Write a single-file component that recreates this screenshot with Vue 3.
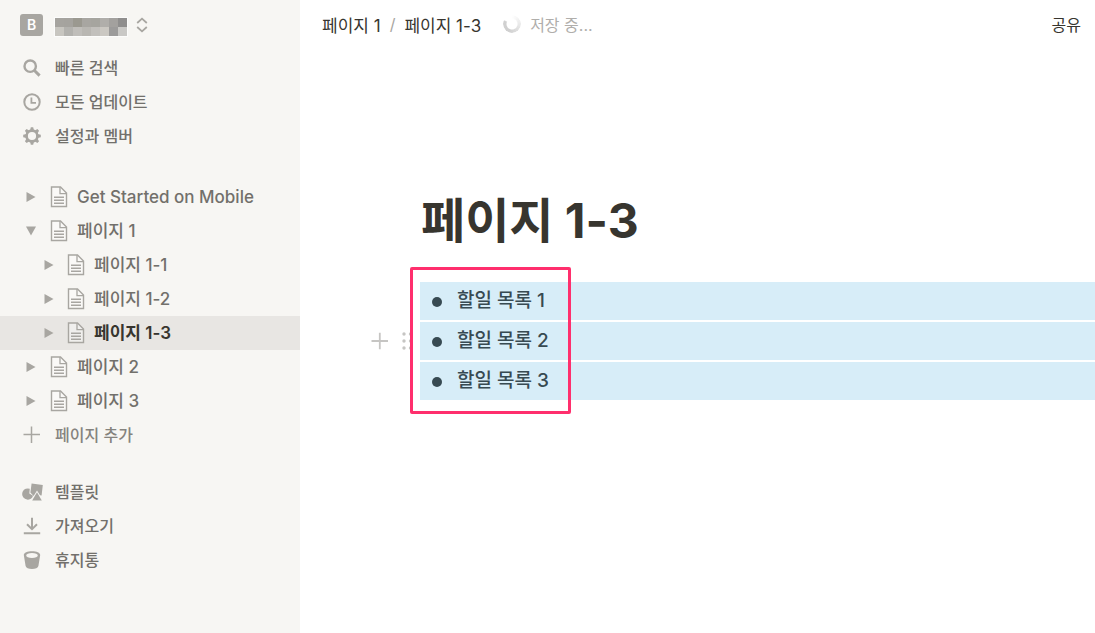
<script setup>
import { ref } from 'vue'

const mosaic = [
  '#a6a49f', '#a5a39e', '#9b9990', '#a8a6a1', '#a6a59f', '#b0aeaa', '#a3a19e', '#8f8e8d',
  '#c8c6c0', '#b3b2ae', '#c0beba', '#b9b7b2', '#c2c0bc', '#cbc8c2', '#9c9b9a', '#c9c8c5',
]

const pages = ref([
  { name: 'Get Started on Mobile', level: 0, open: false, current: false },
  { name: '페이지 1', level: 0, open: true, current: false },
  { name: '페이지 1-1', level: 1, open: false, current: false },
  { name: '페이지 1-2', level: 1, open: false, current: false },
  { name: '페이지 1-3', level: 1, open: false, current: true },
  { name: '페이지 2', level: 0, open: false, current: false },
  { name: '페이지 3', level: 0, open: false, current: false },
])

const todos = ['할일 목록 1', '할일 목록 2', '할일 목록 3']
</script>

<template>
  <div class="app">
    <aside class="sidebar">
      <button class="workspace" type="button" aria-label="B">
        <span class="badge">B</span>
        <span class="mosaic">
          <i v-for="(c, i) in mosaic" :key="i" :style="{ background: c }"></i>
        </span>
        <svg class="updown" width="12" height="16" viewBox="0 0 12 16">
          <path d="M1.2 6 6 1.6 10.8 6M1.2 10 6 14.4 10.8 10" fill="none" stroke="currentColor" stroke-width="1.8" />
        </svg>
      </button>

      <nav class="group">
        <a class="row" href="#search">
          <svg class="icon" viewBox="0 0 18 18">
            <circle cx="7.2" cy="7.2" r="5.7" fill="none" stroke="currentColor" stroke-width="2.4" />
            <path d="M11.2 11.2 16.6 16.6" fill="none" stroke="currentColor" stroke-width="3" />
          </svg>
          <span>빠른 검색</span>
        </a>
        <a class="row" href="#updates">
          <svg class="icon" viewBox="0 0 18 18">
            <circle cx="9" cy="9" r="7.7" fill="none" stroke="currentColor" stroke-width="2" />
            <path d="M8.4 4.6V9.9H13" fill="none" stroke="currentColor" stroke-width="1.8" />
          </svg>
          <span>모든 업데이트</span>
        </a>
        <a class="row" href="#settings">
          <svg class="icon" viewBox="0 0 18 18">
            <circle cx="9" cy="9" r="5.4" fill="none" stroke="currentColor" stroke-width="2.6" />
            <g fill="currentColor">
              <path
                v-for="n in 8"
                :key="n"
                d="M7 3.4 7.8.2H10.2L11 3.4Z"
                :transform="`rotate(${n * 45} 9 9)`"
              />
            </g>
          </svg>
          <span>설정과 멤버</span>
        </a>
      </nav>

      <nav class="group tree">
        <div
          v-for="page in pages"
          :key="page.name"
          class="row page"
          :class="{ nested: page.level === 1, current: page.current }"
        >
          <button
            class="toggle"
            type="button"
            :aria-label="page.name"
            :aria-expanded="page.open"
            @click="page.open = !page.open"
          >
            <svg width="10" height="10" viewBox="0 0 10 10">
              <path :d="page.open ? 'M0 .5H10L5 9.5Z' : 'M.5 0V10L9.5 5Z'" fill="currentColor" />
            </svg>
          </button>
          <a class="page-link" href="#page">
            <svg class="doc" width="18" height="22" viewBox="0 0 18 22">
              <path d="M1.5 1H10.5L16.5 7V20.5H1.5Z" fill="#fff" fill-opacity=".35" stroke="currentColor" stroke-width="1.4" />
              <path d="M10 1V7.6H16.5" fill="none" stroke="currentColor" stroke-width="1.3" />
              <path d="M4 11.3H14M4 14.3H14M4 17.3H14" fill="none" stroke="currentColor" stroke-width="1.4" />
            </svg>
            <span>{{ page.name }}</span>
          </a>
        </div>
        <button class="row add" type="button">
          <svg class="icon" viewBox="0 0 18 18">
            <path d="M.5 8.5H17M8.5.5V17" fill="none" stroke="currentColor" stroke-width="1.5" />
          </svg>
          <span>페이지 추가</span>
        </button>
      </nav>

      <nav class="group">
        <a class="row" href="#templates">
          <svg class="icon wide" viewBox="0 0 22 18">
            <path d="M10.6 0.6 21.8 2 20.6 12.4 19 12.2 16 7.600 12.600 13 9.400 9.600Z" fill="currentColor" />
            <path d="M8.800 5.800A5.600 5.600 0 1 0 11.400 14.200L12 12.800 8.300 10.600Z" fill="currentColor" />
            <path d="M16 9.200 20.800 17.400H11.200Z" fill="currentColor" />
          </svg>
          <span>템플릿</span>
        </a>
        <a class="row" href="#import">
          <svg class="icon" viewBox="0 0 18 18">
            <path d="M9 .8V12M4 7.3 9 12.2 14 7.3M.8 16.3H17.2" fill="none" stroke="currentColor" stroke-width="2" />
          </svg>
          <span>가져오기</span>
        </a>
        <a class="row" href="#trash">
          <svg class="icon" viewBox="0 0 18 18">
            <path
              fill="currentColor"
              fill-rule="evenodd"
              d="M.8 4C.8 1.6 4.5.2 9 .2S17.2 1.6 17.2 4L15.4 15C15 17 12.5 17.9 9 17.9S3 17 2.6 15ZM9 2C5.5 2 3.2 3 3.2 4.4S5.5 6.9 9 6.9 14.8 5.8 14.8 4.4 12.5 2 9 2Z"
            />
          </svg>
          <span>휴지통</span>
        </a>
      </nav>
    </aside>

    <main class="main">
      <header class="topbar">
        <a class="crumb" href="#page-1">페이지 1</a>
        <span class="slash">/</span>
        <a class="crumb" href="#page-1-3">페이지 1-3</a>
        <span class="saving">
          <span class="spinner"></span>
          <span>저장 중...</span>
        </span>
        <button class="share" type="button">공유</button>
      </header>

      <article class="content">
        <h1>페이지 1-3</h1>
        <div class="selection">
          <ul class="todos">
            <li v-for="todo in todos" :key="todo">{{ todo }}</li>
          </ul>
          <div class="handles">
            <button type="button" aria-label="+">
              <svg width="18" height="18" viewBox="0 0 18 18">
                <path d="M.5 9H17M8.8.8V17.2" fill="none" stroke="currentColor" stroke-width="1.8" />
              </svg>
            </button>
            <button type="button" aria-label="⋮⋮">
              <svg width="12" height="18" viewBox="0 0 12 18">
                <g fill="currentColor">
                  <circle cx="3" cy="2" r="1.7" /><circle cx="9.5" cy="2" r="1.7" />
                  <circle cx="3" cy="9" r="1.7" /><circle cx="9.5" cy="9" r="1.7" />
                  <circle cx="3" cy="16" r="1.7" /><circle cx="9.5" cy="16" r="1.7" />
                </g>
              </svg>
            </button>
          </div>
          <div class="highlight"></div>
        </div>
      </article>
    </main>
  </div>
</template>

<style>
body {
  margin: 0;
}
</style>

<style scoped>
.app {
  display: flex;
  min-height: 100vh;
  background: #fff;
  color: #37352f;
  font-family: Inter, 'Noto Sans CJK KR', sans-serif;
  font-size: 16px;
}
a {
  color: inherit;
  text-decoration: none;
}
button {
  margin: 0;
  padding: 0;
  border: 0;
  background: none;
  color: inherit;
  font: inherit;
  text-align: left;
  cursor: pointer;
}
svg {
  display: block;
  flex: none;
}
.sidebar {
  flex: 0 0 300px;
  display: flex;
  flex-direction: column;
  gap: 23px;
  background: #f7f6f3;
  color: #72706b;
  font-weight: 500;
}
.workspace {
  display: flex;
  align-items: center;
  height: 50px;
  margin-bottom: -22px;
  padding-left: 20px;
}
.badge {
  width: 23px;
  height: 22px;
  margin-right: 11px;
  border-radius: 3px;
  background: #a8a6a1;
  color: #fff;
  font-size: 14px;
  font-weight: 600;
  line-height: 22px;
  text-align: center;
}
.mosaic {
  display: grid;
  grid-template-columns: repeat(8, 9px);
  grid-auto-rows: 9px;
  margin: 4px 8px 0 0;
  border: 1px solid #fcfcfb;
}
.updown,
.icon,
.toggle,
.doc {
  color: #a8a6a1;
}
.group {
  display: flex;
  flex-direction: column;
}
.tree {
  margin-top: 4px;
}
.row {
  display: flex;
  align-items: center;
  height: 34px;
  padding-left: 23px;
  line-height: 34px;
  white-space: nowrap;
}
.icon {
  width: 18px;
  height: 18px;
  margin-right: 14px;
}
.icon.wide {
  width: 22px;
  margin: 0 12px 0 -2px;
}
.toggle {
  flex: none;
  width: 18px;
  height: 34px;
  display: flex;
  align-items: center;
  justify-content: center;
}
.page {
  padding-left: 22px;
  font-size: 17px;
}
.page.nested {
  padding-left: 40px;
}
.page-link {
  flex: 1;
  display: flex;
  align-items: center;
  gap: 9px;
  padding-left: 10px;
}
.nested .page-link {
  padding-left: 9px;
}
.current {
  background: #e8e6e3;
  color: #37352f;
  font-weight: 600;
}
.add {
  color: #85837e;
}
.main {
  flex: 1;
  min-width: 0;
}
.topbar {
  display: flex;
  align-items: center;
  height: 48px;
  padding: 0 14px 0 22px;
  white-space: nowrap;
}
.crumb {
  font-size: 17px;
}
.slash {
  margin: 0 9px;
  color: #a8a6a1;
}
.saving {
  display: flex;
  align-items: center;
  gap: 9px;
  margin-left: 22px;
  color: #b0aeab;
}
.spinner {
  width: 18px;
  height: 18px;
  border-radius: 50%;
  background: conic-gradient(#d0d0d000 0deg, #d0d0d0 200deg, #d0d0d0 290deg, #d0d0d000 300deg);
  mask: radial-gradient(circle, transparent 5px, #000 6px);
}
.share {
  margin-left: auto;
}
.content {
  padding: 141px 0 0 121px;
}
h1 {
  margin: 0;
  font-size: 48px;
  font-weight: 700;
  line-height: 64px;
}
.selection {
  position: relative;
  margin: 29px 0 0 -1px;
}
.todos {
  display: flex;
  flex-direction: column;
  gap: 2px;
  margin: 0;
  padding: 0;
  list-style: none;
  color: #374a52;
  font-size: 19px;
  font-weight: 500;
}
.todos li {
  display: flex;
  align-items: center;
  gap: 15px;
  height: 38px;
  padding-left: 12px;
  background: #d7edf8;
  line-height: 38px;
}
.todos li::before {
  content: '';
  width: 10px;
  height: 10px;
  margin-top: 2px;
  border-radius: 50%;
  background: #374a52;
}
.handles {
  position: absolute;
  top: 50px;
  left: -49px;
  display: flex;
  gap: 12px;
  color: #c6c5c3;
}
.highlight {
  position: absolute;
  top: -15px;
  left: -10px;
  box-sizing: border-box;
  width: 161px;
  height: 147px;
  border: 3px solid #ff2f6d;
  border-radius: 2px;
}
</style>
